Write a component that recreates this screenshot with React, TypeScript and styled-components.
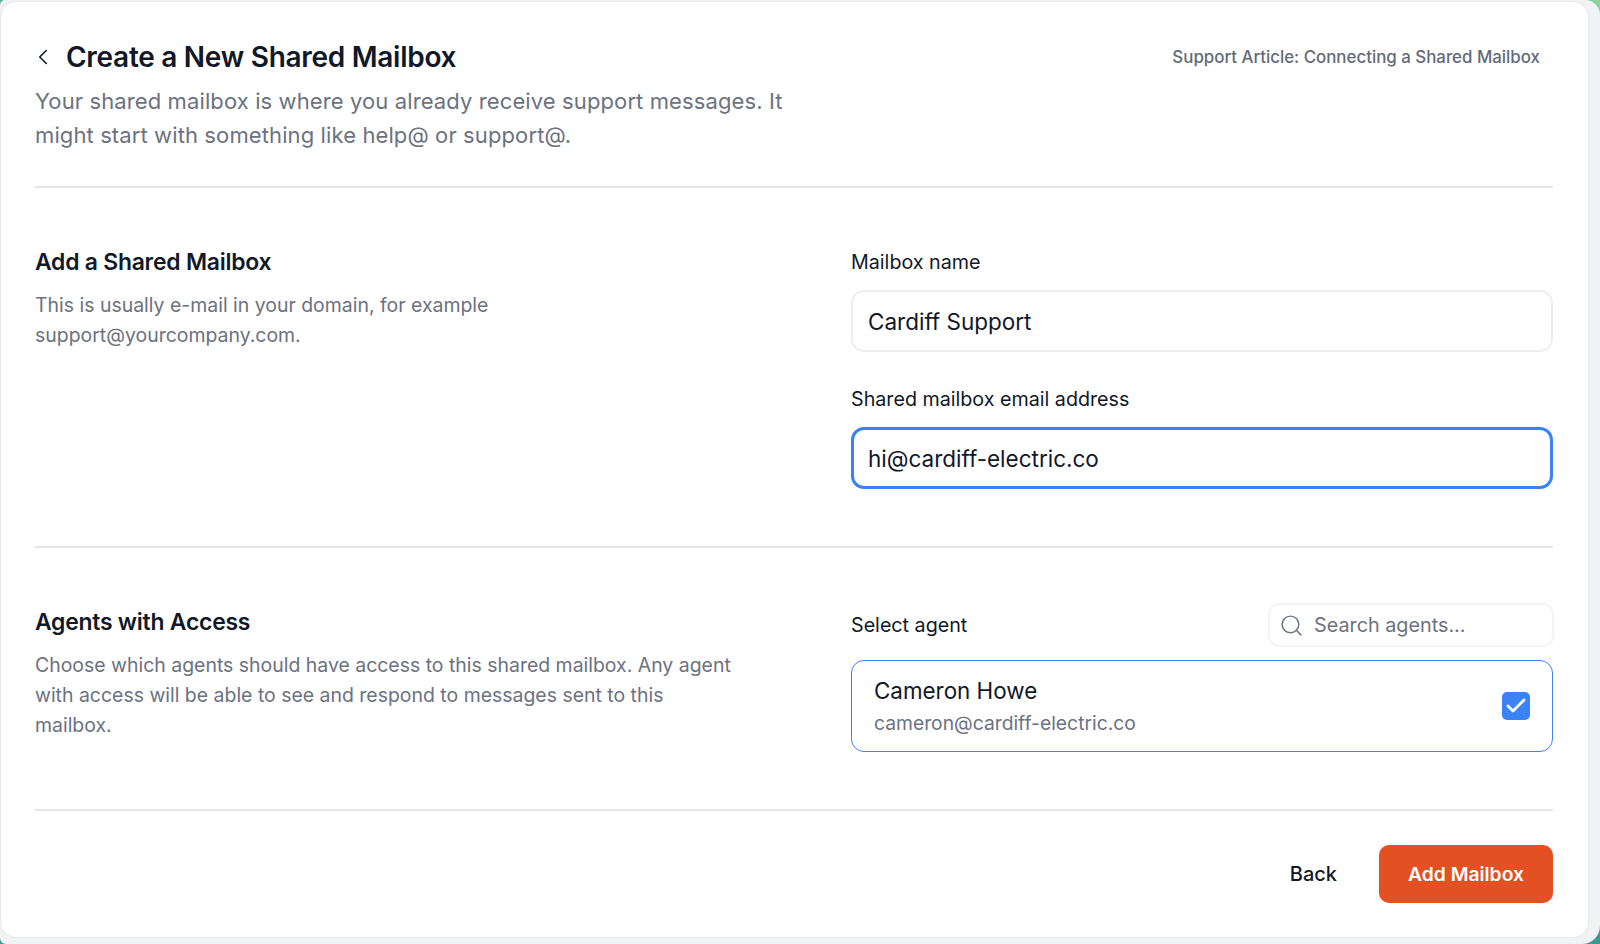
import * as React from "react";
import styled, { createGlobalStyle } from "styled-components";
import { ChevronLeft, Search, Check } from "lucide-react";

const Global = createGlobalStyle`
  html, body { margin: 0; padding: 0; height: 100%; }
  body { font-family: Inter, "Liberation Sans", sans-serif; background: #f3f4f6; -webkit-font-smoothing: antialiased; }
`;

const Backdrop = styled.div`
  width: 1600px;
  height: 944px;
  background: linear-gradient(200deg, #8ed39f 0%, #3a9a8e 55%);
  overflow: hidden;
`;

const Frame = styled.div`
  height: 100%;
  box-sizing: border-box;
  padding: 2px 12px 7px 1px;
  background: #f1f2f4;
  border-radius: 5px 15px 18px 6px;
`;

const Card = styled.main`
  height: 100%;
  box-sizing: border-box;
  padding: 0 35px 0 34px;
  background: #fff;
  border-radius: 15px;
  box-shadow: 0 0 0 1px #e8e9ed;
  display: flex;
  flex-direction: column;
`;

const Header = styled.header`
  height: 184px;
  box-sizing: border-box;
  padding-top: 35px;
  display: flex;
  justify-content: space-between;
  align-items: flex-start;
`;

const TitleRow = styled.div`
  display: flex;
  align-items: center;
  height: 40px;
  gap: 10px;
  margin-left: -5px;
  color: #111827;
`;

const Title = styled.h1`
  margin: 0;
  font-size: 28px;
  line-height: 40px;
  font-weight: 600;
  letter-spacing: -0.28px;
  color: #111827;
`;

const Lead = styled.p`
  margin: 7px 0 0;
  width: 780px;
  font-size: 22px;
  line-height: 34px;
  letter-spacing: 0.11px;
  color: #6b7280;
`;

const ArticleLink = styled.a`
  margin: 8px 13px 0 0;
  font-size: 16.88px;
  line-height: 24px;
  font-weight: 500;
  color: #636a78;
`;

const Section = styled.section<{ $top: number }>`
  border-top: 2px solid #e5e7eb;
  padding: ${(p) => p.$top}px 0 57px;
  display: grid;
  grid-template-columns: 816px 702px;
`;

const Intro = styled.div<{ $shift: number }>`
  margin-top: ${(p) => p.$shift}px;
`;

const SectionTitle = styled.h2`
  margin: 0;
  font-size: 22.9px;
  line-height: 30px;
  font-weight: 600;
  letter-spacing: -0.22px;
  color: #111827;
`;

const SectionText = styled.p`
  margin: 13px 0 0;
  width: 700px;
  font-size: 19.45px;
  line-height: 30px;
  color: #6b7280;
`;

const Fields = styled.div`
  display: flex;
  flex-direction: column;
  gap: 32px;
`;

const Field = styled.div`
  display: flex;
  flex-direction: column;
  gap: 13px;
`;

const Label = styled.div`
  font-size: 19.7px;
  line-height: 30px;
  color: #111827;
`;

const TextBox = styled.div<{ $focus?: boolean }>`
  height: 62px;
  box-sizing: border-box;
  padding: 0 15px;
  display: flex;
  align-items: center;
  border-radius: 13px;
  border: ${(p) => (p.$focus ? "3px solid #3b82f6" : "2px solid #eceef1")};
  padding-left: ${(p) => (p.$focus ? "14px" : "15px")};
  font-size: 22.5px;
  color: #111827;
`;

const AgentHead = styled.div`
  display: flex;
  justify-content: space-between;
  align-items: center;
  height: 44px;
  margin-bottom: 13px;
`;

const SearchBox = styled.div`
  width: 286px;
  height: 44px;
  margin-right: -1px;
  box-sizing: border-box;
  padding: 0 9px;
  display: flex;
  align-items: center;
  gap: 10px;
  border-radius: 11px;
  border: 2px solid #f3f4f6;
  font-size: 19.8px;
  color: #6b7280;
`;

const AgentCard = styled.div`
  height: 92px;
  box-sizing: border-box;
  padding: 0 22px;
  display: flex;
  align-items: center;
  justify-content: space-between;
  border-radius: 13px;
  border: 1px solid #3b82f6;
`;

const AgentName = styled.div`
  font-size: 22.4px;
  line-height: 34px;
  color: #111827;
`;

const AgentMail = styled.div`
  font-size: 19.3px;
  line-height: 30px;
  color: #6b7280;
`;

const CheckBox = styled.div`
  width: 28px;
  height: 28px;
  border-radius: 5px;
  background: #3b82f6;
  color: #fff;
  display: flex;
  align-items: center;
  justify-content: center;
`;

const Footer = styled.footer`
  border-top: 2px solid #e5e7eb;
  padding-top: 34px;
  display: flex;
  justify-content: flex-end;
  align-items: center;
  gap: 42px;
`;

const BackButton = styled.button`
  padding: 0;
  border: 0;
  background: none;
  font: 500 20px/30px Inter, sans-serif;
  color: #111827;
`;

const PrimaryButton = styled.button`
  width: 174px;
  height: 58px;
  border: 0;
  border-radius: 10px;
  background: #e35122;
  color: #fff;
  font: 600 19.3px/30px Inter, sans-serif;
`;

export default function App() {
  return (
    <Backdrop>
      <Global />
      <Frame>
        <Card>
          <Header>
            <div>
              <TitleRow>
                <ChevronLeft size={26} strokeWidth={1.5} />
                <Title>Create a New Shared Mailbox</Title>
              </TitleRow>
              <Lead>
                Your shared mailbox is where you already receive support messages. It might start with something like help@ or support@.
              </Lead>
            </div>
            <ArticleLink>Support Article: Connecting a Shared Mailbox</ArticleLink>
          </Header>
          <Section $top={59}>
            <Intro $shift={0}>
              <SectionTitle>Add a Shared Mailbox</SectionTitle>
              <SectionText>This is usually e-mail in your domain, for example support@yourcompany.com.</SectionText>
            </Intro>
            <Fields>
              <Field>
                <Label>Mailbox name</Label>
                <TextBox>Cardiff Support</TextBox>
              </Field>
              <Field>
                <Label>Shared mailbox email address</Label>
                <TextBox $focus>hi@cardiff-electric.co</TextBox>
              </Field>
            </Fields>
          </Section>
          <Section $top={55}>
            <Intro $shift={4}>
              <SectionTitle>Agents with Access</SectionTitle>
              <SectionText>
                Choose which agents should have access to this shared mailbox. Any agent with access will be able to see and respond to messages sent to this mailbox.
              </SectionText>
            </Intro>
            <div>
              <AgentHead>
                <Label>Select agent</Label>
                <SearchBox>
                  <Search size={25} strokeWidth={1.4} />
                  Search agents...
                </SearchBox>
              </AgentHead>
              <AgentCard>
                <div>
                  <AgentName>Cameron Howe</AgentName>
                  <AgentMail>cameron@cardiff-electric.co</AgentMail>
                </div>
                <CheckBox>
                  <Check size={24} strokeWidth={2.8} />
                </CheckBox>
              </AgentCard>
            </div>
          </Section>
          <Footer>
            <BackButton>Back</BackButton>
            <PrimaryButton>Add Mailbox</PrimaryButton>
          </Footer>
        </Card>
      </Frame>
    </Backdrop>
  );
}
